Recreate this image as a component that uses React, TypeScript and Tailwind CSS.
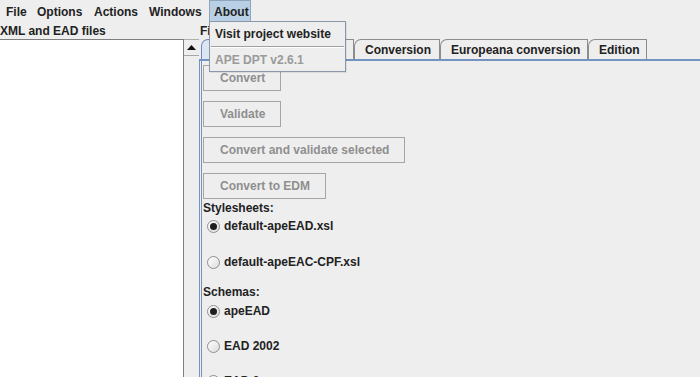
import React from 'react';

const font = "font-['Liberation_Sans',Arial,sans-serif]";

const menus = [
	{ label: 'File', cls: 'w-[32px] pl-[6px]' },
	{ label: 'Options', cls: 'w-[56px] pl-[5px]' },
	{ label: 'Actions', cls: 'w-[55px] pl-[6px]' },
	{ label: 'Windows', cls: 'w-[66px] pl-[6px]' },
];

const Radio = ({ label, checked }: { label: string; checked?: boolean }) => (
	<div className="flex h-[20px] items-center gap-[4px] pl-[4px]">
		<span className="flex h-[13px] w-[13px] items-center justify-center rounded-full border border-[#8e8f8f] bg-gradient-to-br from-[#ffffff] to-[#dcdcdc]">
			{checked && <span className="h-[7px] w-[7px] rounded-full bg-[#1e1e1e]" />}
		</span>
		<span className="text-[12px] font-bold text-[#222]">{label}</span>
	</div>
);

const Btn = ({ label, mt }: { label: string; mt: string }) => (
	<div className={`${mt} flex h-[26px] w-fit items-center border border-[#a5a5a5] bg-[#eeeeee] pl-[16px] pr-[15px] text-[12px] font-bold text-[#8f8f8f]`}>
		{label}
	</div>
);

const Tab = ({ label, w, selected }: { label: string; w: string; selected?: boolean }) => (
	<div
		className={`${w} flex h-[20px] items-center rounded-tl-[7px] border-l border-r border-t pl-[10px] text-[12px] font-bold text-[#222] ${
			selected ? 'border-[#6d8bb8] bg-[#dce6f2]' : 'border-[#8c8c8c] bg-[#eeeeee]'
		}`}
	>
		{label}
	</div>
);

export default function App() {
	return (
		<div className={`${font} relative h-[377px] w-[700px] overflow-hidden bg-[#eeeeee] text-[12px] text-[#222]`}>
			{/* menu bar */}
			<div className="flex h-[22px] items-stretch">
				{menus.map((m) => (
					<div key={m.label} className={`${m.cls} flex items-center pt-[1px] font-bold text-[#222]`}>
						{m.label}
					</div>
				))}
				<div className="flex h-[21px] w-[42px] items-center border border-b-0 border-[#8fa3bb] bg-[#b8cfe5] pl-[4px] pt-[1px] font-bold text-[#222]">
					About
				</div>
			</div>

			<div className="flex h-[355px]">
				{/* left */}
				<div className="flex w-[199px] flex-col">
					<div className="flex h-[17px] items-center pt-[1px] font-bold">XML and EAD files</div>
					<div className="flex flex-1">
						<div className="flex-1 border-r border-t border-[#7f7f7f] bg-white" />
						<div className="w-[15px] border-t border-[#b0b0b0] bg-[#eeeeee]">
							<div className="flex h-[16px] items-center justify-center border-b border-[#a8a8a8] bg-[#eeeeee]">
								<svg width="9" height="5" viewBox="0 0 9 5">
									<path d="M0 5 L4.5 0 L9 5 Z" fill="#111" />
								</svg>
							</div>
						</div>
					</div>
				</div>

				{/* right */}
				<div className="flex flex-1 flex-col">
					<div className="flex h-[17px] items-center pl-[1px] pt-[1px] font-bold">Files</div>
					<div className="flex h-[21px] items-end pl-[2px]">
						<Tab label="Summary" w="w-[76px]" selected />
						<Tab label="Validation" w="w-[77px]" />
						<Tab label="Conversion" w="w-[86px]" />
						<Tab label="Europeana conversion" w="w-[148px]" />
						<Tab label="Edition" w="w-[59px]" />
					</div>
					<div className="h-[3px] border-b border-t border-[#7593c0] bg-[#d4dfee]" />
					<div className="flex flex-1 border-l-[3px] border-double border-[#7593c0] pl-[1px]">
						<div className="flex flex-col">
							<Btn label="Convert" mt="mt-[4px]" />
							<Btn label="Validate" mt="mt-[10px]" />
							<Btn label="Convert and validate selected" mt="mt-[10px]" />
							<Btn label="Convert to EDM" mt="mt-[10px]" />
							<div className="mt-[1px] flex h-[16px] items-center font-bold">Stylesheets:</div>
							<Radio label="default-apeEAD.xsl" checked />
							<div className="mt-[16px]">
								<Radio label="default-apeEAC-CPF.xsl" />
							</div>
							<div className="mt-[12px] flex h-[16px] items-center font-bold">Schemas:</div>
							<div className="mt-[1px]">
								<Radio label="apeEAD" checked />
							</div>
							<div className="mt-[15px]">
								<Radio label="EAD 2002" />
							</div>
							<div className="mt-[15px]">
								<Radio label="EAD 3" />
							</div>
						</div>
					</div>
				</div>
			</div>

			{/* About dropdown */}
			<div className="absolute left-[209px] top-[21px] w-[137px] border border-[#8a97a8] bg-[#eeeeee] shadow-[1px_1px_0_rgba(0,0,0,0.08)]">
				<div className="flex h-[24px] items-center pl-[5px] text-[12px] font-bold text-[#222]">Visit project website</div>
				<div className="mx-[1px] border-t border-[#a0a0a0] border-b-white border-b" />
				<div className="flex h-[23px] items-center pl-[5px] text-[12px] font-bold text-[#9a9a9a]">APE DPT v2.6.1</div>
			</div>
		</div>
	);
}
